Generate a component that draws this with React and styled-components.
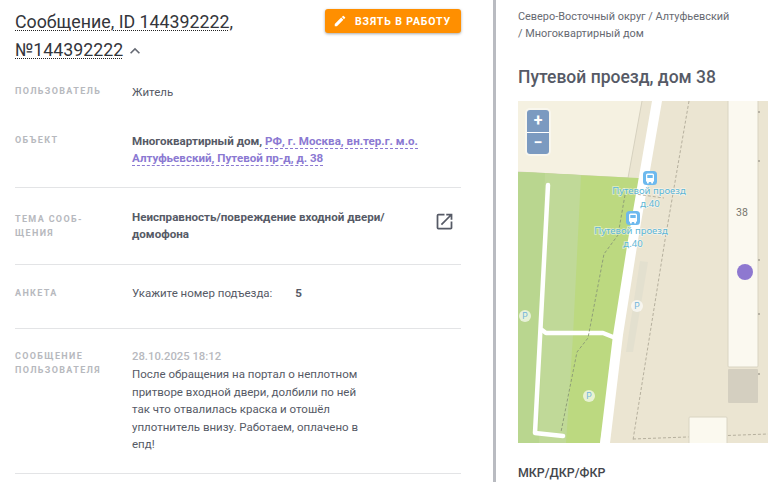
// Карточка сообщения с картой объекта
import styled, { createGlobalStyle } from "styled-components";
import { MdEdit, MdExpandLess, MdOpenInNew } from "react-icons/md";

const GlobalStyle = createGlobalStyle`
  html, body {
    margin: 0;
    padding: 0;
    height: 100%;
    overflow: hidden;
    background: #fff;
    font-family: Roboto, "Liberation Sans", sans-serif;
  }
`;

const Page = styled.div`
  display: flex;
  width: 768px;
  height: 482px;
  overflow: hidden;
`;

const LeftPanel = styled.div`
  flex-shrink: 0;
  width: 446px;
  padding: 8px 32px 0 15px;
  border-right: 3px solid #b9bbc1;
`;

const Header = styled.div`
  display: flex;
  justify-content: space-between;
  align-items: flex-start;
  margin-bottom: 21px;
`;

const Title = styled.h1`
  margin: 0;
  width: 240px;
  font-size: 17.8px;
  font-weight: 400;
  line-height: 27.5px;
  color: #33353b;
`;

const TitleText = styled.span`
  text-decoration: underline dotted #222 1px;
  text-underline-offset: 2px;
`;

const Chevron = styled(MdExpandLess)`
  vertical-align: -5px;
  margin-left: 2px;
  color: #666a74;
`;

const ActionButton = styled.button`
  display: flex;
  align-items: center;
  gap: 8px;
  width: 136px;
  height: 24px;
  margin-top: 1px;
  padding: 0 0 0 8px;
  border: none;
  border-radius: 3px;
  background: #ff8f00;
  color: #fff;
  font-family: inherit;
  font-size: 10.5px;
  font-weight: 700;
  letter-spacing: 0.85px;
  white-space: nowrap;
  box-shadow: 0 1px 3px rgba(0, 0, 0, 0.35);
`;

const Row = styled.div`
  display: grid;
  grid-template-columns: 117px 1fr;
  padding: ${props => props.$pad || "0"};
  border-bottom: ${props => (props.$line ? "1px solid #e3e4e6" : "none")};
`;

const Label = styled.div`
  margin-top: ${props => props.$top || "0"};
  font-size: 9px;
  font-weight: 700;
  letter-spacing: 1.35px;
  line-height: 14px;
  color: #b7b9be;
  text-transform: uppercase;
`;

const Value = styled.div`
  font-size: 11.5px;
  line-height: 17.5px;
  color: #565a66;
  max-width: ${props => props.$max || "none"};
`;

const Strong = styled.b`
  font-size: 11.6px;
  font-weight: 700;
`;

const AddressLink = styled.span`
  font-size: 11.6px;
  font-weight: 700;
  color: #8b79d2;
  border-bottom: 1px dashed #8b79d2;
`;

const TopicLine = styled.div`
  display: flex;
  justify-content: space-between;
  align-items: flex-start;
`;

const OpenIcon = styled(MdOpenInNew)`
  margin: 2px 6px 0 0;
  color: #565a66;
`;

const AnswerPair = styled.div`
  display: flex;
  gap: 23px;
`;

const DateText = styled.div`
  padding-bottom: 1px;
  font-size: 11.3px;
  font-weight: 500;
  line-height: 16px;
  color: #b7b9be;
`;

const RightPanel = styled.div`
  flex: 1;
  min-width: 0;
  padding: 8px 0 0 22px;
`;

const Breadcrumbs = styled.div`
  width: 214px;
  font-size: 10.9px;
  line-height: 17px;
  color: #676a72;
`;

const Heading = styled.h2`
  margin: 23px 0 12px;
  font-size: 17.5px;
  font-weight: 500;
  line-height: 24px;
  color: #565a66;
`;

const MapBox = styled.div`
  position: relative;
  width: 250px;
  height: 342px;
  overflow: hidden;
`;

const ZoomControl = styled.div`
  position: absolute;
  left: 9px;
  top: 9px;
  display: flex;
  flex-direction: column;
  gap: 1px;
  border-radius: 3px;
  box-shadow: 0 0 0 2px rgba(255, 255, 255, 0.45);
  background: #fff;
`;

const ZoomButton = styled.div`
  display: flex;
  align-items: center;
  justify-content: center;
  width: 22px;
  height: 21.5px;
  background: #7b9ac0;
  color: #fff;
  font-size: 16px;
  font-weight: 700;
  line-height: 1;
  border-radius: ${props => (props.$top ? "3px 3px 0 0" : "0 0 3px 3px")};
`;

const SectionTitle = styled.div`
  margin-top: 21px;
  font-size: 12.4px;
  font-weight: 500;
  line-height: 17px;
  color: #44464c;
`;

const BusStop = ({ x, y }) => (
  <g transform={`translate(${x - 7} ${y - 7})`}>
    <rect width="14" height="14" rx="3.5" fill="#6db9ee" />
    <rect x="3" y="2.5" width="8" height="8.5" rx="1.5" fill="#fff" />
    <rect x="4.3" y="4" width="5.4" height="3" fill="#6db9ee" />
    <rect x="4" y="11" width="1.8" height="1.4" fill="#fff" />
    <rect x="8.2" y="11" width="1.8" height="1.4" fill="#fff" />
  </g>
);

const StopLabel = ({ x, y, children }) => (
  <text
    x={x}
    y={y}
    textAnchor="middle"
    fontFamily="'Noto Sans', sans-serif"
    fontSize="9.5"
    fill="#5cb6d6"
    stroke="#fff"
    strokeOpacity="0.55"
    strokeWidth="1.5"
    paintOrder="stroke"
  >
    {children}
  </text>
);

const Parking = ({ x, y }) => (
  <g>
    <circle cx={x} cy={y} r="6" fill="#fff" fillOpacity="0.65" />
    <text x={x} y={y + 3} textAnchor="middle" fontFamily="Roboto, sans-serif" fontSize="8.5" fill="#72b4dc">
      P
    </text>
  </g>
);

const MapDrawing = () => (
  <svg width="250" height="342" viewBox="0 0 250 342">
    <rect width="250" height="342" fill="#ebe5d2" />
    <polygon points="0,0 124,0 110,77 0,71" fill="#f5f1e1" />
    <polyline points="124,0 110,77 0,71" fill="none" stroke="#d6d1bf" strokeWidth="1" />
    <polygon points="0,71 120,77 125,77 82,342 0,342" fill="#bcd980" />
    <polygon points="0,71 63,74 55,234 48,342 0,342" fill="#c0d998" />
    <polygon points="0,71 27,72 21,342 0,342" fill="#b9d68f" />
    <polygon points="134,0 144,0 120,139 105,234 92,342 82,342 95,234 110,139" fill="#fff" />
    <polygon points="122,160 130,161 115,251 108,251" fill="#e3e0cf" />
    <g fill="none" stroke="#fff" strokeWidth="4.5" strokeLinecap="round" strokeLinejoin="round">
      <polyline points="30,84 17,332 45,335" />
      <polyline points="24,229 28,232 85,232 95,236" />
    </g>
    <g fill="none" stroke="#b6b09e" strokeWidth="1" strokeDasharray="3 2">
      <polyline points="171,0 147,139 115,339" />
      <polyline points="115,338 250,333" />
      <polyline points="110,92 146,97" />
    </g>
    <polyline
      points="107,94 100,134 86,153 70,237 59,251 43,331"
      fill="none"
      stroke="#8f9f78"
      strokeWidth="1"
      strokeDasharray="3 2"
    />
    <rect x="210" y="-2" width="30" height="268" rx="1" fill="#fbf9f0" stroke="#d9d4c2" />
    <rect x="210" y="268" width="30" height="34" rx="1" fill="#d4cfc0" />
    <rect x="171" y="316" width="38" height="30" rx="1" fill="#fbf9ef" stroke="#d9d4c2" />
    <g fill="#a7a294">
      <circle cx="241" cy="11" r="1" />
      <circle cx="241" cy="60" r="1" />
      <circle cx="241" cy="159" r="1" />
      <circle cx="241" cy="213" r="1" />
      <circle cx="241" cy="273" r="1" />
    </g>
    <text x="224" y="115" textAnchor="middle" fontFamily="Roboto, sans-serif" fontSize="10.5" fill="#77756d">
      38
    </text>
    <Parking x={7} y={215} />
    <Parking x={119} y={205} />
    <Parking x={71} y={295} />
    <BusStop x={132} y={77} />
    <StopLabel x={131} y={93}>Путевой проезд</StopLabel>
    <StopLabel x={132} y={106}>д.40</StopLabel>
    <BusStop x={115} y={117} />
    <StopLabel x={113} y={133}>Путевой проезд</StopLabel>
    <StopLabel x={115} y={146}>д.40</StopLabel>
    <circle cx="227" cy="171" r="8" fill="#8e78d0" />
  </svg>
);

const App = () => {
  return (
    <>
      <GlobalStyle />
      <Page>
        <LeftPanel>
          <Header>
            <Title>
              <TitleText>Сообщение, ID 144392222,</TitleText>
              <br />
              <TitleText>№144392222</TitleText>
              <Chevron size={20} />
            </Title>
            <ActionButton>
              <MdEdit size={14} />
              ВЗЯТЬ В РАБОТУ
            </ActionButton>
          </Header>

          <Row $pad="0 0 31px">
            <Label>Пользователь</Label>
            <Value>Житель</Value>
          </Row>
          <Row $line $pad="0 0 19px">
            <Label>Объект</Label>
            <Value>
              <Strong>Многоквартирный дом, </Strong>
              <AddressLink>РФ, г. Москва, вн.тер.г. м.о.</AddressLink>
              <br />
              <AddressLink>Алтуфьевский, Путевой пр-д, д. 38</AddressLink>
            </Value>
          </Row>
          <Row $line $pad="21px 0 20px">
            <Label $top="3px">
              Тема сооб-
              <br />
              щения
            </Label>
            <TopicLine>
              <Value $max="270px">
                <Strong>Неисправность/повреждение входной двери/ домофона</Strong>
              </Value>
              <OpenIcon size={21} />
            </TopicLine>
          </Row>
          <Row $line $pad="20px 0 26px">
            <Label $top="1px">Анкета</Label>
            <AnswerPair>
              <Value>Укажите номер подъезда:</Value>
              <Value>
                <Strong>5</Strong>
              </Value>
            </AnswerPair>
          </Row>
          <Row $line $pad="20px 0 19px">
            <Label>
              Сообщение
              <br />
              пользователя
            </Label>
            <div>
              <DateText>28.10.2025 18:12</DateText>
              <Value $max="232px">
                После обращения на портал о неплотном притворе входной двери, долбили по ней так что отвалилась краска и
                отошёл уплотнитель внизу. Работаем, оплачено в епд!
              </Value>
            </div>
          </Row>
        </LeftPanel>

        <RightPanel>
          <Breadcrumbs>Северо-Восточный округ / Алтуфьевский / Многоквартирный дом</Breadcrumbs>
          <Heading>Путевой проезд, дом 38</Heading>
          <MapBox>
            <MapDrawing />
            <ZoomControl>
              <ZoomButton $top>+</ZoomButton>
              <ZoomButton>−</ZoomButton>
            </ZoomControl>
          </MapBox>
          <SectionTitle>МКР/ДКР/ФКР</SectionTitle>
        </RightPanel>
      </Page>
    </>
  );
};

export default App;
